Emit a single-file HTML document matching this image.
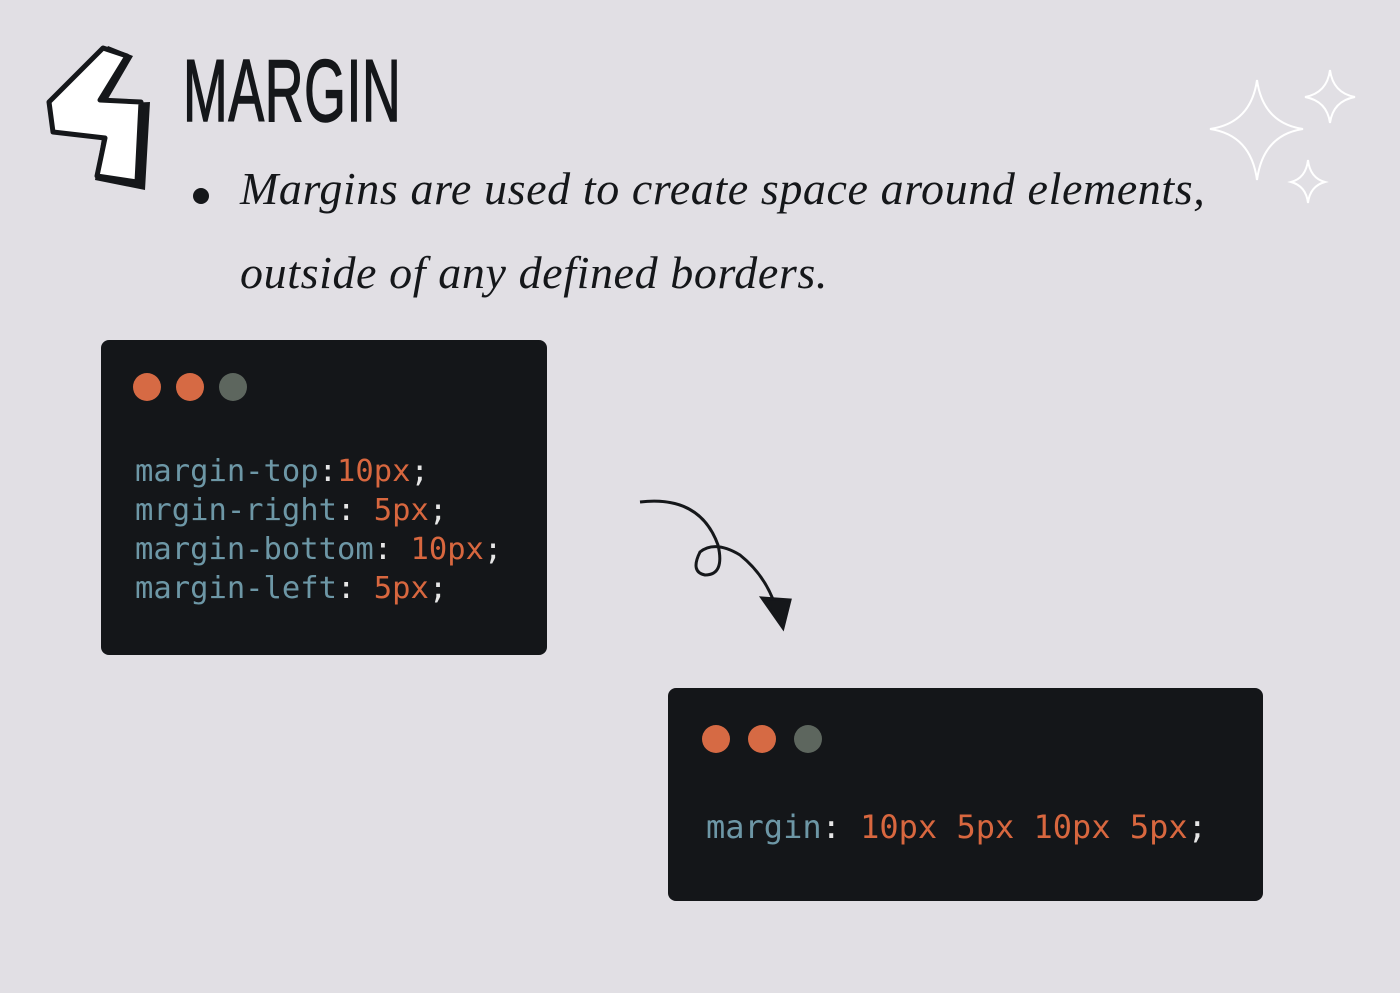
<!DOCTYPE html>
<html><head><meta charset="utf-8"><style>
body{margin:0;width:1400px;height:993px;background:#e1dfe4;position:relative;overflow:hidden;font-family:"Liberation Sans",sans-serif}
.t{position:absolute;left:183px;top:40px;font-family:"Liberation Sans Narrow","Liberation Sans",sans-serif;font-size:88px;color:#15171a;transform:scaleX(0.61);transform-origin:left top;letter-spacing:1px;-webkit-text-stroke:1.5px #15171a}
.p{position:absolute;left:240px;font-family:"Liberation Serif",serif;font-style:italic;font-size:46px;color:#15171a;letter-spacing:0.6px}
.dot{position:absolute;left:193px;top:188px;width:16px;height:16px;border-radius:50%;background:#15171a}
.box{position:absolute;background:#141619;border-radius:8px}
.c{position:absolute;width:28px;height:28px;border-radius:50%}
.code{position:absolute;font-family:"DejaVu Sans Mono","Liberation Mono",monospace;white-space:pre;color:#6d97a6}
.o{color:#d8673f}.w{color:#e6e6e6}
</style></head><body>
<svg style="position:absolute;left:45px;top:42px" width="112" height="152" viewBox="0 0 112 152">
<path d="M63 4 L88 14 L60 62 L105 60 L100 148 L50 138 L57 96 L10 92 Z" fill="#15171a"/>
<path d="M58 6 L82 14 L55 58 L96 60 L92 140 L52 134 L60 96 L8 90 L4 60 Z" fill="#fff" stroke="#15171a" stroke-width="5" stroke-linejoin="round"/>
</svg>
<div class="t">MARGIN</div>
<div class="dot"></div>
<div class="p" style="top:162px">Margins are used to create space around elements,</div>
<div class="p" style="top:246px">outside of any defined borders.</div>
<svg style="position:absolute;left:1205px;top:65px" width="160" height="145" viewBox="0 0 160 145" fill="none" stroke="#fff" stroke-width="2">
<path d="M52 15 Q58 58 98 64 Q58 70 52 115 Q46 70 5 64 Q46 58 52 15Z"/>
<path d="M125 5 Q128 28 150 32 Q128 36 125 58 Q122 36 100 32 Q122 28 125 5Z"/>
<path d="M103 95 Q105 113 120 117 Q105 121 103 138 Q101 121 86 117 Q101 113 103 95Z"/>
</svg>
<div class="box" style="left:101px;top:340px;width:446px;height:315px">
<div class="c" style="left:32px;top:33px;background:#d66a44"></div>
<div class="c" style="left:75px;top:33px;background:#d66a44"></div>
<div class="c" style="left:118px;top:33px;background:#5d665e"></div>
<div class="code" style="left:34px;top:112px;font-size:30.5px;line-height:39px">margin-top<span class="w">:</span><span class="o">10px</span><span class="w">;</span>
mrgin-right<span class="w">:</span> <span class="o">5px</span><span class="w">;</span>
margin-bottom<span class="w">:</span> <span class="o">10px</span><span class="w">;</span>
margin-left<span class="w">:</span> <span class="o">5px</span><span class="w">;</span></div>
</div>
<svg style="position:absolute;left:630px;top:490px" width="170" height="145" viewBox="0 0 170 145" fill="none" stroke="#15171a" stroke-width="3">
<path d="M10 12 Q70 5 88 55 Q95 85 75 85 Q60 82 70 62 Q85 50 110 65 Q135 85 145 115"/>
<path d="M132 108 L160 110 L153 138 Z" fill="#15171a"/>
</svg>
<div class="box" style="left:668px;top:688px;width:595px;height:213px">
<div class="c" style="left:34px;top:37px;background:#d66a44"></div>
<div class="c" style="left:80px;top:37px;background:#d66a44"></div>
<div class="c" style="left:126px;top:37px;background:#5d665e"></div>
<div class="code" style="left:38px;top:120px;font-size:32px">margin<span class="w">:</span> <span class="o">10px 5px 10px 5px</span><span class="w">;</span></div>
</div>
</body></html>
